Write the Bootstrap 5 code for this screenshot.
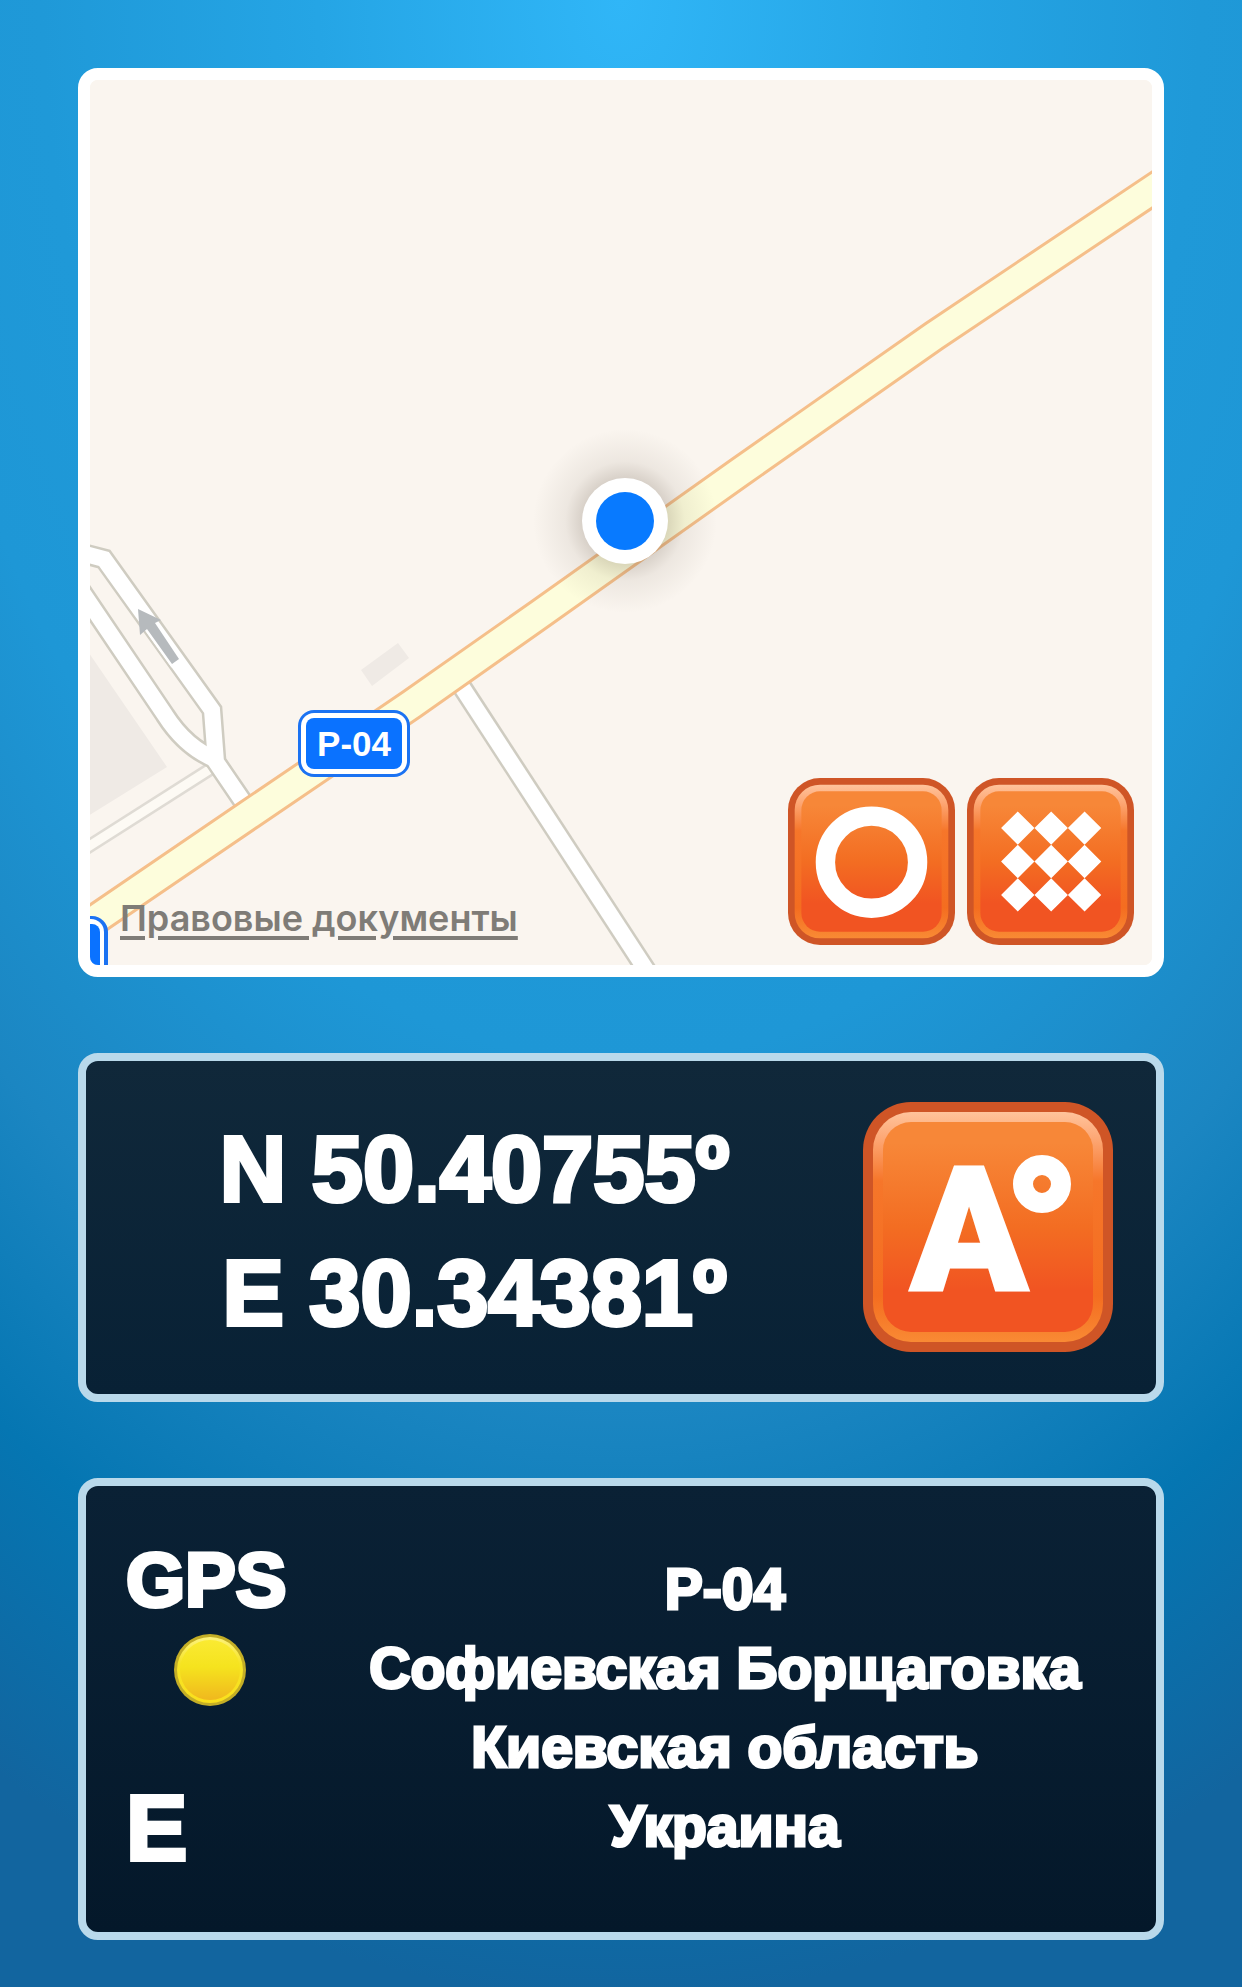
<!DOCTYPE html>
<html lang="ru">
<head>
<meta charset="utf-8">
<meta name="viewport" content="width=device-width, initial-scale=1">
<title>GPS</title>
<link href="https://cdn.jsdelivr.net/npm/bootstrap@5.3.0/dist/css/bootstrap.min.css" rel="stylesheet">
<style>
  body {
    min-height: 100vh;
    background: radial-gradient(ellipse 1378px 2040px at 50% 0, #30b6f7 0, #25a5e5 22%, #1f99d8 42%, #1e97d6 52%, #1b86c2 69%, #0576b2 83%, #12659f 98%) no-repeat #12659f;
    color: #fff;
    font-family: "Liberation Sans Narrow", "Liberation Sans", sans-serif;
  }
  .screen { padding: 68px 78px 48px; gap: 76px; }
  .map-card { border: 12px solid #fff; border-radius: 20px; background: #faf5ef; overflow: hidden; }
  .map-card > svg { display: block; width: 100%; height: auto; border-radius: 6px; }
  .legal { left: 30px; bottom: 25px; font: 600 36px/44px Inter, sans-serif; color: #7f7c77; text-underline-offset: 5px; text-decoration-thickness: 4px; }
  .legal:hover { color: #5f5c57; }
  .map-tools { right: 18px; bottom: 20px; gap: 12px; }
  .tool { padding: 0; border: 0; background: none; line-height: 0; }
  .tool-sm svg { width: 167px; height: 167px; }
  .tool-lg svg { width: 250px; height: 250px; }
  .info-card { border: 8px solid #b9d9eb; border-radius: 20px; }
  .coords-card { background: linear-gradient(#10283a, #082135); padding: 38px 43px 39px 0; }
  .place-card { background: linear-gradient(#0a2135, #04182a); padding: 46px 28px 48px 40px; }
  .heavy { font-weight: 700; -webkit-text-stroke: 4px #fff; paint-order: stroke fill; }
  .coords { font-size: 92px; line-height: 124px; }
  .status { width: 196px; }
  .gps-label { font-size: 76px; line-height: 96px; }
  .lamp { width: 72px; height: 72px; margin: 6px 0 66px 48px; }
  .heading { font-size: 92px; line-height: 112px; }
  .place { font-size: 57px; line-height: 79px; -webkit-text-stroke-width: 3px; }
</style>
</head>
<body>
<main class="screen container-fluid d-flex flex-column">

  <section class="map-card position-relative" aria-label="Карта">
    <svg viewBox="90 80 1062 885" role="img" aria-label="Карта">
      <defs>
        <radialGradient id="halo"><stop offset=".4" stop-color="#5a4a3a" stop-opacity=".26"/><stop offset=".65" stop-color="#5a4a3a" stop-opacity=".08"/><stop offset="1" stop-color="#5a4a3a" stop-opacity="0"/></radialGradient>
      </defs>
      <rect x="90" y="80" width="1062" height="885" fill="#faf5ef"/>
      <path d="M80 640L167 767L80 821ZM398 643L409 658L372 686L361 670Z" fill="#efeae5"/>
      <g fill="none">
        <path d="M80 852L212 768" stroke="#dfdbd4" stroke-width="14"/>
        <path d="M80 852L212 768" stroke="#fdfaf4" stroke-width="9"/>
        <g stroke="#cfccc1" stroke-width="21">
          <path d="M70 550L104 559L212 710L216 762L246 806"/>
          <path d="M76 583L165 715Q186 748 217 760"/>
          <path d="M460 684L654 982"/>
        </g>
        <g stroke="#fff" stroke-width="16">
          <path d="M70 550L104 559L212 710L216 762L250 812"/>
          <path d="M76 583L165 715Q186 748 217 760"/>
          <path d="M456 678L654 982"/>
        </g>
        <g stroke-linejoin="round">
          <path d="M60 944L90 923L250 814L412 704L540 614L740 472L934 336L1170 178" stroke="#f5bf8a" stroke-width="33"/>
          <path d="M60 944L90 923L250 814L412 704L540 614L740 472L934 336L1170 178" stroke="#fdfddc" stroke-width="27"/>
        </g>
      </g>
      <path d="M155 623L179 659L172 664L147 629Z" fill="none" stroke="#fff" stroke-width="5"/>
      <path d="M138 609L161 620L155 623L179 659L172 664L147 629L140 635Z" fill="#b6babd"/>
      <g>
        <rect x="298" y="710" width="112" height="67" rx="16" fill="#1b72f2"/>
        <rect x="301" y="713" width="106" height="61" rx="13" fill="#fff"/>
        <rect x="306" y="718" width="96" height="51" rx="8" fill="#0a72ff"/>
        <text x="354" y="756" text-anchor="middle" font-size="35" font-weight="700" fill="#fff">P-04</text>
      </g>
      <g>
        <rect x="-5" y="916" width="113" height="67" rx="16" fill="#1b72f2"/>
        <rect x="-2" y="919" width="106" height="61" rx="13" fill="#fff"/>
        <rect x="3" y="924" width="97" height="51" rx="8" fill="#0a72ff"/>
      </g>
      <circle cx="625" cy="521" r="92" fill="url(#halo)"/>
      <circle cx="625" cy="521" r="43" fill="#fff"/>
      <circle cx="625" cy="521" r="29" fill="#087aff"/>
    </svg>
    <a class="legal position-absolute" href="#">Правовые документы</a>
    <div class="map-tools position-absolute d-flex">
      <button class="tool tool-sm" type="button" aria-label="Обычная карта">
        <svg viewBox="0 0 250 250">
          <defs>
            <linearGradient id="bevel" x2="0" y2="1"><stop offset="0" stop-color="#ffc39b"/><stop offset=".12" stop-color="#fda673"/><stop offset=".3" stop-color="#f6762a"/><stop offset=".8" stop-color="#f46d20"/><stop offset="1" stop-color="#f98a34"/></linearGradient>
            <linearGradient id="face" x2="0" y2="1"><stop offset=".1" stop-color="#f78738"/><stop offset=".5" stop-color="#f36d22"/><stop offset=".8" stop-color="#f15422"/></linearGradient>
            <g id="key"><rect width="250" height="250" rx="48" fill="#cf5526"/><rect x="10" y="10" width="230" height="230" rx="38" fill="url(#bevel)"/><rect x="20" y="20" width="210" height="210" rx="28" fill="url(#face)"/></g>
          </defs>
          <use href="#key"/><circle cx="125" cy="126" r="69" fill="none" stroke="#fff" stroke-width="29"/>
        </svg>
      </button>
      <button class="tool tool-sm" type="button" aria-label="Спутник">
        <svg viewBox="0 0 250 250">
          <use href="#key"/>
          <g fill="#fff">
            <path id="rhombs" d="M76 50l25 25-25 25-25-25zM126 50l25 25-25 25-25-25zM176 50l25 25-25 25-25-25z"/>
            <use href="#rhombs" y="50"/><use href="#rhombs" y="100"/>
          </g>
        </svg>
      </button>
    </div>
  </section>

  <section class="info-card coords-card d-flex align-items-center">
    <div class="coords heavy flex-grow-1 text-center pt-2">
      <div>N 50.40755º</div>
      <div>E 30.34381º</div>
    </div>
    <button class="tool tool-lg flex-shrink-0" type="button" aria-label="Формат координат">
      <svg viewBox="0 0 250 250">
        <use href="#key"/>
        <text x="106" y="188" text-anchor="middle" font-family="Roboto, sans-serif" font-weight="900" font-size="172" fill="#fff" stroke="#fff" stroke-width="3">A</text>
        <circle cx="179" cy="82" r="19" fill="none" stroke="#fff" stroke-width="20"/>
      </svg>
    </button>
  </section>

  <section class="info-card place-card d-flex align-items-center">
    <div class="status flex-shrink-0">
      <div class="gps-label heavy">GPS</div>
      <svg class="lamp d-block" viewBox="0 0 72 72" role="img" aria-label="Сигнал GPS">
        <defs><linearGradient id="glow" x2="0" y2="1"><stop offset="0" stop-color="#faea32"/><stop offset=".45" stop-color="#f5e31e"/><stop offset="1" stop-color="#f0b81e"/></linearGradient>
        <linearGradient id="rim" x2="0" y2="1"><stop offset="0" stop-color="#fdf27c"/><stop offset=".4" stop-color="#f6e426"/><stop offset="1" stop-color="#fae01c"/></linearGradient></defs>
        <circle cx="36" cy="36" r="36" fill="#c4ae26"/><circle cx="36" cy="36" r="33" fill="url(#rim)"/><circle cx="36" cy="36" r="30" fill="url(#glow)"/>
      </svg>
      <div class="heading heavy">E</div>
    </div>
    <div class="place heavy flex-grow-1 text-center">
      <div>P-04</div>
      <div class="text-nowrap">Софиевская Борщаговка</div>
      <div>Киевская область</div>
      <div>Украина</div>
    </div>
  </section>

</main>
<script src="https://cdn.jsdelivr.net/npm/bootstrap@5.3.0/dist/js/bootstrap.bundle.min.js"></script>
</body>
</html>
